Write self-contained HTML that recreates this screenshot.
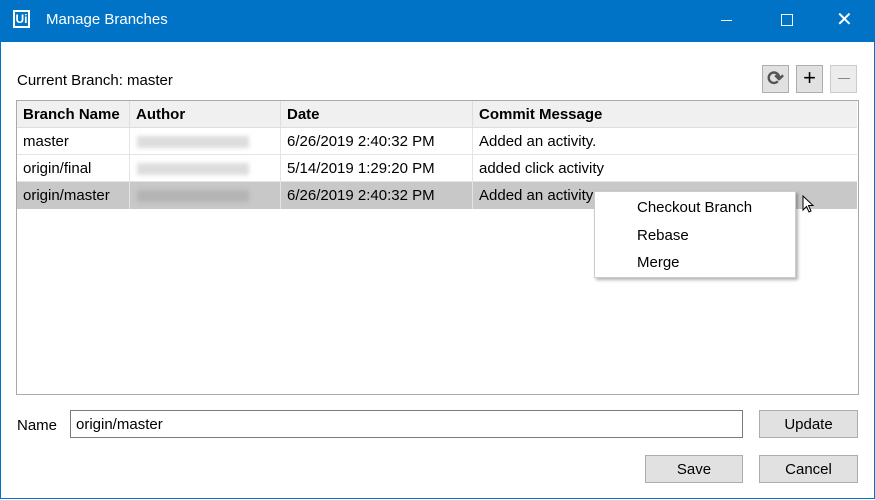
<!DOCTYPE html><html><head><style>
body{margin:0;width:875px;height:500px;overflow:hidden;font-family:"Liberation Sans",sans-serif;font-size:15px;color:#000;background:#fff;position:relative}
.a{position:absolute}
.tb{left:0;top:0;width:875px;height:42px;background:#0173c7;color:#fff}
.bd{left:0;top:42px;width:873px;height:456px;border:1px solid #0173c7;border-top:none;background:#fff}
.btn{background:#e1e1e1;border:1px solid #adadad;box-sizing:border-box;text-align:center}
.cell{position:absolute;top:0;height:100%;line-height:27px;padding-left:6px;box-sizing:border-box}
.blur{position:absolute;left:136px;width:112px;height:12px;top:8px;background:#ddd;filter:blur(2px)}
</style></head><body>
<div class="a tb">
<div class="a" style="left:13px;top:10px;width:17px;height:18px;border:2px solid #fff;box-sizing:border-box;font-size:12px;font-weight:bold;line-height:14px;text-align:center">Ui</div>
<div class="a" style="left:46px;top:11px;font-size:15px">Manage Branches</div>
<div class="a" style="left:721px;top:20px;width:11px;height:1px;background:#fff"></div>
<div class="a" style="left:781px;top:14px;width:10px;height:10px;border:1px solid #fff"></div>
<div class="a" style="left:836px;top:10px;font-size:20px;line-height:20px">✕</div>
</div>
<div class="a bd"></div>
<div class="a" style="left:17px;top:72px">Current Branch: master</div>
<div class="a btn" style="left:762px;top:65px;width:27px;height:28px;line-height:26px;font-size:20px;color:#555;font-weight:bold">⟳</div>
<div class="a btn" style="left:796px;top:65px;width:27px;height:28px;line-height:24px;font-size:22px">+</div>
<div class="a btn" style="left:830px;top:65px;width:27px;height:28px;background:#ececec;border-color:#ccc"><div class="a" style="left:7px;top:12px;width:12px;height:1px;background:#888"></div></div>
<div class="a" style="left:16px;top:100px;width:841px;height:293px;border:1px solid #aaa"></div>
<div class="a" style="left:17px;top:101px;width:840px;height:26px;background:#f0f0f0;font-weight:bold;border-bottom:1px solid #ddd">
<div class="cell" style="left:0">Branch Name</div><div class="cell" style="left:112px;border-left:1px solid #ddd">Author</div><div class="cell" style="left:263px;border-left:1px solid #ddd">Date</div><div class="cell" style="left:455px;border-left:1px solid #ddd">Commit Message</div></div>
<div class="a" style="left:17px;top:128px;width:840px;height:26px;border-bottom:1px solid #e4e4e4">
<div class="cell" style="left:0">master</div><div class="cell" style="left:112px;border-left:1px solid #e4e4e4;width:151px"></div><div class="blur" style="left:120px"></div><div class="cell" style="left:263px;border-left:1px solid #e4e4e4">6/26/2019 2:40:32 PM</div><div class="cell" style="left:455px;border-left:1px solid #e4e4e4">Added an activity.</div></div>
<div class="a" style="left:17px;top:155px;width:840px;height:26px;border-bottom:1px solid #e4e4e4">
<div class="cell" style="left:0">origin/final</div><div class="cell" style="left:112px;border-left:1px solid #e4e4e4;width:151px"></div><div class="blur" style="left:120px"></div><div class="cell" style="left:263px;border-left:1px solid #e4e4e4">5/14/2019 1:29:20 PM</div><div class="cell" style="left:455px;border-left:1px solid #e4e4e4">added click activity</div></div>
<div class="a" style="left:17px;top:182px;width:840px;height:27px;background:#c8c8c8">
<div class="cell" style="left:0">origin/master</div><div class="cell" style="left:112px;border-left:1px solid #e4e4e4;width:151px"></div><div class="blur" style="left:120px;background:#b4b4b4"></div><div class="cell" style="left:263px;border-left:1px solid #e4e4e4">6/26/2019 2:40:32 PM</div><div class="cell" style="left:455px;border-left:1px solid #e4e4e4">Added an activity</div></div>
<svg class="a" style="left:802px;top:195px" width="14" height="20"><path d="M1 1 L1 15 L4.5 11.5 L7 17 L9 16 L6.5 10.5 L11 10.5 Z" fill="#fff" stroke="#000"/></svg>
<div class="a" style="left:594px;top:191px;width:200px;height:85px;background:#fff;border:1px solid #ccc;box-shadow:2px 2px 3px rgba(0,0,0,.3)">
<div class="a" style="left:42px;top:7px">Checkout Branch</div><div class="a" style="left:42px;top:35px">Rebase</div><div class="a" style="left:42px;top:62px">Merge</div></div>
<div class="a" style="left:17px;top:417px">Name</div>
<div class="a" style="left:70px;top:410px;width:673px;height:28px;border:1px solid #7a7a7a;box-sizing:border-box;line-height:27px;padding-left:5px">origin/master</div>
<div class="a btn" style="left:759px;top:410px;width:99px;height:28px;line-height:28px">Update</div>
<div class="a btn" style="left:645px;top:455px;width:98px;height:28px;line-height:28px">Save</div>
<div class="a btn" style="left:759px;top:455px;width:99px;height:28px;line-height:28px">Cancel</div>
</body></html>
